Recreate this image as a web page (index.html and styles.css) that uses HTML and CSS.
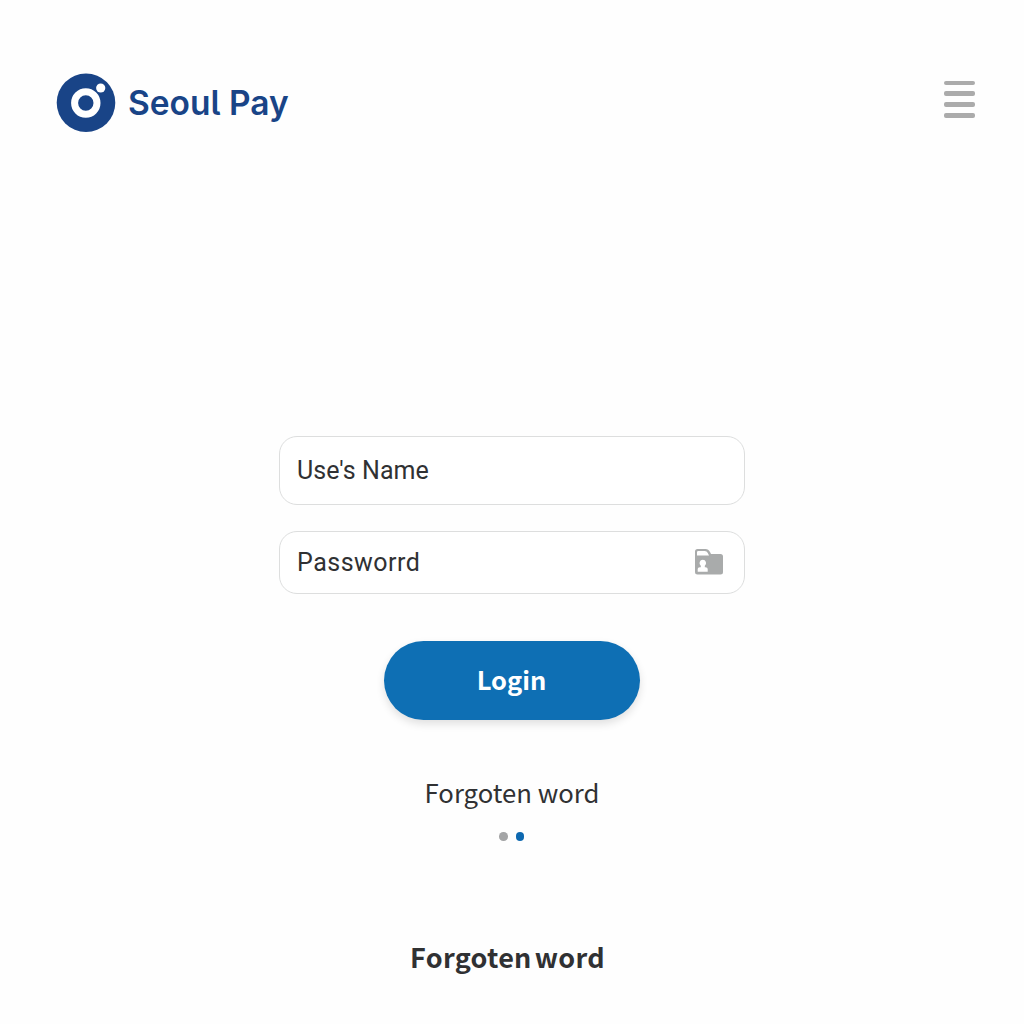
FILE: index.html
```html
<!DOCTYPE html>
<html lang="en">
<head>
<meta charset="utf-8">
<title>Seoul Pay</title>
<link rel="stylesheet" href="styles.css">
</head>
<body>
<header class="header">
  <a class="brand">
    <svg class="brand-mark" viewBox="0 0 60 60" aria-hidden="true">
      <circle cx="30" cy="29.700" r="29.300" fill="#194487"/>
      <circle cx="29.800" cy="30" r="11.200" fill="none" stroke="#fff" stroke-width="7"/>
      <circle cx="44.700" cy="15" r="4.600" fill="#fff"/>
    </svg>
    <span class="brand-name">Seoul Pay</span>
  </a>
  <button class="menu" aria-label="Menu">
    <span class="menu-bar"></span>
    <span class="menu-bar"></span>
    <span class="menu-bar"></span>
    <span class="menu-bar"></span>
  </button>
</header>
<main class="login">
  <div class="field field-name"><span class="field-label">Use's Name</span></div>
  <div class="field field-password">
    <span class="field-label">Passworrd</span>
    <svg class="field-icon" viewBox="0 0 30 28" aria-hidden="true">
      <path fill="#a9abab" fill-rule="evenodd" d="M3.500 1H11.500Q14.500 1 16 4L17 6H26.500Q29 6 29 8.500V24Q29 26.500 26.500 26.500H3.500Q1 26.500 1 24V3.500Q1 1 3.500 1ZM4.200 3Q3 3 3 4.200V7.500H15L13.800 5Q12.800 3 10.800 3Z"/>
      <path fill="#fff" d="M8.800 11.800A3.300 3.300 0 0 1 10.800 17.700V19.200H11.500Q13.700 19.200 13.700 21V23.700H3.700V21Q3.700 19.200 5.800 19.200H6.800V17.700A3.300 3.300 0 0 1 8.800 11.800Z"/>
    </svg>
  </div>
  <button class="submit"><span class="submit-text">Login</span></button>
  <a class="forgot">Forgoten word</a>
  <div class="dots"><span class="dot"></span><span class="dot dot-active"></span></div>
</main>
<footer class="footer"><span class="footer-text">Forgoten word</span></footer>
</body>
</html>
```
FILE: styles.css
```css
* { box-sizing: border-box; }
body {
  margin: 0;
  height: 1024px;
  display: flex;
  flex-direction: column;
  overflow: hidden;
  background: #fefefe;
  color: #303133;
  font-family: "Noto Sans CJK KR", sans-serif;
}
button { border: 0; padding: 0; font: inherit; }
.header {
  display: flex;
  justify-content: space-between;
  align-items: flex-start;
  padding: 73px 49px 0 56px;
}
.brand { display: flex; align-items: center; gap: 12px; height: 60px; }
.brand-mark { width: 60px; height: 60px; }
.brand-name {
  color: #194487;
  font-family: Inter, sans-serif;
  font-feature-settings: "cv05";
  font-size: 33.500px;
  font-weight: 600;
  line-height: 60px;
  white-space: nowrap;
}
.menu {
  display: flex;
  flex-direction: column;
  gap: 6.300px;
  width: 31.500px;
  margin-top: 7.500px;
  background: none;
}
.menu-bar { height: 4.700px; border-radius: 2px; background: #ababab; }
.login { display: flex; flex-direction: column; align-items: center; margin-top: 303px; }
.field {
  display: flex;
  align-items: center;
  justify-content: space-between;
  width: 466px;
  padding: 1px 20px 0 17px;
  border: 1px solid #dddede;
  border-radius: 18px;
  background: #fff;
  font: 25px/30px Roboto, sans-serif;
  letter-spacing: 0.500px;
}
.field-name { height: 69px; letter-spacing: 0.050px; }
.field-password { height: 63px; margin-top: 26px; padding-top: 0; }
.field-icon { width: 30px; height: 28px; margin-top: -2px; }
.submit {
  width: 256px;
  height: 79px;
  margin-top: 47px;
  border-radius: 40px;
  background: #0e6fb4;
  box-shadow: 0 4px 8px rgba(0, 0, 0, 0.120);
  color: #fff;
  font-size: 25.500px;
  font-weight: 700;
  line-height: 75px;
}
.submit-text { display: block; height: 79px; padding-right: 1px; }
.forgot { margin-top: 53px; font-size: 25.700px; line-height: 38px; white-space: nowrap; }
.dots { display: flex; gap: 8px; margin-top: 21px; padding-right: 1px; }
.dot { width: 8.500px; height: 8.500px; border-radius: 50%; background: #a4a5a6; }
.dot-active { background: #0d68b0; }
.footer {
  display: flex;
  justify-content: center;
  margin-top: 97px;
  padding-right: 9px;
  font-size: 27px;
  font-weight: 700;
  letter-spacing: 0.300px;
  word-spacing: -3.300px;
  line-height: 38px;
  white-space: nowrap;
}
```
